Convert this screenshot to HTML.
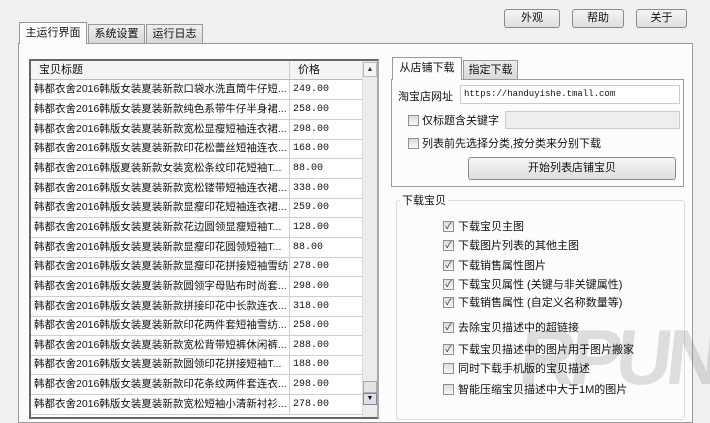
<!DOCTYPE html>
<html><head><meta charset="utf-8"><style>
*{box-sizing:border-box;margin:0;padding:0}
body{width:710px;height:414px;overflow:hidden;background:#f0f0f0;font-family:"Liberation Sans","Noto Sans CJK SC",sans-serif;font-size:11px;color:#111;position:relative}
.a{position:absolute}
.btn{position:absolute;border:1px solid #8a8a8a;border-radius:3px;background:linear-gradient(#f6f6f6,#dedede);text-align:center;font-size:11px}
.tab{position:absolute;border:1px solid #999;border-bottom:none;background:linear-gradient(#eee,#d8d8d8);text-align:center;font-size:11px}
.row{position:absolute;left:0;width:331px;height:20px;border-bottom:1px solid #cfcfcf;font-size:10.5px;line-height:19px;white-space:nowrap;overflow:hidden}
.row span{position:absolute;left:3px;width:254px;overflow:hidden}
.row b{font-weight:normal;position:absolute;left:262px;font-family:"Liberation Mono",monospace;font-size:10px}
.row i{position:absolute;left:258px;top:0;bottom:0;border-left:1px solid #cfcfcf}
.cb{position:absolute;width:11px;height:11px;border:1px solid #8f8f8f;background:linear-gradient(#ddd,#f8f8f8);font-size:9px;line-height:9px;text-align:center;color:#224}
.ck{position:absolute;font-size:11px;white-space:nowrap}
</style></head><body>
<div class="btn" style="left:504px;top:9px;width:56px;height:19px;line-height:17px">外观</div>
<div class="btn" style="left:572px;top:9px;width:52px;height:19px;line-height:17px">帮助</div>
<div class="btn" style="left:636px;top:9px;width:51px;height:19px;line-height:17px">关于</div>

<div class="a" style="left:18px;top:43px;width:675px;height:380px;border:1px solid #999;background:#fcfcfc"></div>
<div class="a" style="left:19px;top:22px;width:68px;height:22px;border:1px solid #999;border-bottom:none;background:#fcfcfc;text-align:center;line-height:20px">主运行界面</div>
<div class="tab" style="left:88px;top:24px;width:57px;height:19px;line-height:18px">系统设置</div>
<div class="tab" style="left:146px;top:24px;width:57px;height:19px;line-height:18px">运行日志</div>

<div class="a" style="left:29px;top:59px;width:350px;height:360px;border:2px solid #666;border-right-color:#aaa;background:#fff;overflow:hidden">
 <div class="a" style="left:0;top:0;width:331px;height:19px;background:#f4f4f4;border-bottom:1px solid #bbb;line-height:18px">
  <span class="a" style="left:8px">宝贝标题</span><span class="a" style="left:267px">价格</span><i class="a" style="left:258px;top:0;bottom:0;border-left:1px solid #ccc"></i>
 </div>
 <div class="a" style="left:331px;top:0;width:16px;height:360px;background:#ececec;border-left:1px solid #ddd"></div>
 <div class="a" style="left:332px;top:1px;width:14px;height:15px;border:1px solid #bbb;background:#f4f4f4;font-size:7px;text-align:center;line-height:13px;color:#333">▲</div>
 <div class="a" style="left:332px;top:320px;width:14px;height:12px;border:1px solid #aaa;background:#e4e4e4"></div>
 <div class="a" style="left:332px;top:332px;width:14px;height:12px;border:1px solid #888;background:#dde;font-size:7px;text-align:center;line-height:10px">▼</div>
 <div class="a" style="left:0;top:18px;width:331px">
  <div class="row" style="top:1px"><span>韩都衣舍2016韩版女装夏装新款口袋水洗直筒牛仔短...</span><i></i><b>249.00</b></div>
  <div class="row" style="top:21px"><span>韩都衣舍2016韩版女装夏装新款纯色系带牛仔半身裙...</span><i></i><b>258.00</b></div>
  <div class="row" style="top:41px"><span>韩都衣舍2016韩版女装夏装新款宽松显瘦短袖连衣裙...</span><i></i><b>298.00</b></div>
  <div class="row" style="top:60px"><span>韩都衣舍2016韩版女装夏装新款印花松蕾丝短袖连衣...</span><i></i><b>168.00</b></div>
  <div class="row" style="top:80px"><span>韩都衣舍2016韩版夏装新款女装宽松条纹印花短袖T...</span><i></i><b>88.00</b></div>
  <div class="row" style="top:100px"><span>韩都衣舍2016韩版女装夏装新款宽松镂带短袖连衣裙...</span><i></i><b>338.00</b></div>
  <div class="row" style="top:119px"><span>韩都衣舍2016韩版女装夏装新款显瘦印花短袖连衣裙...</span><i></i><b>259.00</b></div>
  <div class="row" style="top:139px"><span>韩都衣舍2016韩版女装夏装新款花边圆领显瘦短袖T...</span><i></i><b>128.00</b></div>
  <div class="row" style="top:159px"><span>韩都衣舍2016韩版女装夏装新款显瘦印花圆领短袖T...</span><i></i><b>88.00</b></div>
  <div class="row" style="top:178px"><span>韩都衣舍2016韩版女装夏装新款显瘦印花拼接短袖雪纺...</span><i></i><b>278.00</b></div>
  <div class="row" style="top:198px"><span>韩都衣舍2016韩版女装夏装新款圆领字母贴布时尚套...</span><i></i><b>298.00</b></div>
  <div class="row" style="top:218px"><span>韩都衣舍2016韩版女装夏装新款拼接印花中长款连衣...</span><i></i><b>318.00</b></div>
  <div class="row" style="top:237px"><span>韩都衣舍2016韩版女装夏装新款印花两件套短袖雪纺...</span><i></i><b>258.00</b></div>
  <div class="row" style="top:257px"><span>韩都衣舍2016韩版女装夏装新款宽松背带短裤休闲裤...</span><i></i><b>288.00</b></div>
  <div class="row" style="top:276px"><span>韩都衣舍2016韩版女装夏装新款圆领印花拼接短袖T...</span><i></i><b>188.00</b></div>
  <div class="row" style="top:296px"><span>韩都衣舍2016韩版女装夏装新款印花条纹两件套连衣...</span><i></i><b>298.00</b></div>
  <div class="row" style="top:316px"><span>韩都衣舍2016韩版女装夏装新款宽松短袖小清新衬衫...</span><i></i><b>278.00</b></div>
 </div>
</div>

<div class="a" style="left:391px;top:79px;width:293px;height:108px;border:1px solid #999;background:#fcfcfc"></div>
<div class="a" style="left:392px;top:57px;width:70px;height:23px;border:1px solid #999;border-bottom:none;background:#fcfcfc;text-align:center;line-height:21px">从店铺下载</div>
<div class="tab" style="left:463px;top:60px;width:55px;height:19px;line-height:19px">指定下载</div>
<div class="ck" style="left:398px;top:88px">淘宝店网址</div>
<div class="a" style="left:460px;top:85px;width:220px;height:19px;border:1px solid #ccc;background:#fff;font-family:'Liberation Mono',monospace;font-size:9px;line-height:17px;padding-left:3px">https://handuyishe.tmall.com</div>
<div class="cb" style="left:408px;top:115px"></div><div class="ck" style="left:422px;top:112px">仅标题含关键字</div>
<div class="a" style="left:505px;top:111px;width:175px;height:18px;border:1px solid #ccc;background:#eee"></div>
<div class="cb" style="left:408px;top:138px"></div><div class="ck" style="left:422px;top:135px">列表前先选择分类,按分类来分别下载</div>
<div class="btn" style="left:468px;top:157px;width:208px;height:23px;line-height:21px">开始列表店铺宝贝</div>

<div class="a" style="left:396px;top:200px;width:289px;height:220px;border:1px solid #ddd;border-radius:3px"></div>
<div class="a" style="left:400px;top:192px;background:#fcfcfc;padding:0 2px">下载宝贝</div>
<div class="a" style="left:520px;top:318px;font-size:78px;font-weight:bold;color:rgba(150,150,150,0.3);letter-spacing:-6px;transform:skewX(-6deg);line-height:1;font-family:'Liberation Sans',sans-serif">RPUN</div>
<div class="cb" style="left:443px;top:221px">✓</div><div class="ck" style="left:458px;top:218px">下载宝贝主图</div>
<div class="cb" style="left:443px;top:240px">✓</div><div class="ck" style="left:458px;top:237px">下载图片列表的其他主图</div>
<div class="cb" style="left:443px;top:260px">✓</div><div class="ck" style="left:458px;top:257px">下载销售属性图片</div>
<div class="cb" style="left:443px;top:279px">✓</div><div class="ck" style="left:458px;top:276px">下载宝贝属性 (关键与非关键属性)</div>
<div class="cb" style="left:443px;top:297px">✓</div><div class="ck" style="left:458px;top:294px">下载销售属性 (自定义名称数量等)</div>
<div class="cb" style="left:443px;top:322px">✓</div><div class="ck" style="left:458px;top:319px">去除宝贝描述中的超链接</div>
<div class="cb" style="left:443px;top:344px">✓</div><div class="ck" style="left:458px;top:341px">下载宝贝描述中的图片用于图片搬家</div>
<div class="cb" style="left:443px;top:363px"></div><div class="ck" style="left:458px;top:360px">同时下载手机版的宝贝描述</div>
<div class="cb" style="left:443px;top:384px"></div><div class="ck" style="left:458px;top:381px">智能压缩宝贝描述中大于1M的图片</div>
</body></html>
